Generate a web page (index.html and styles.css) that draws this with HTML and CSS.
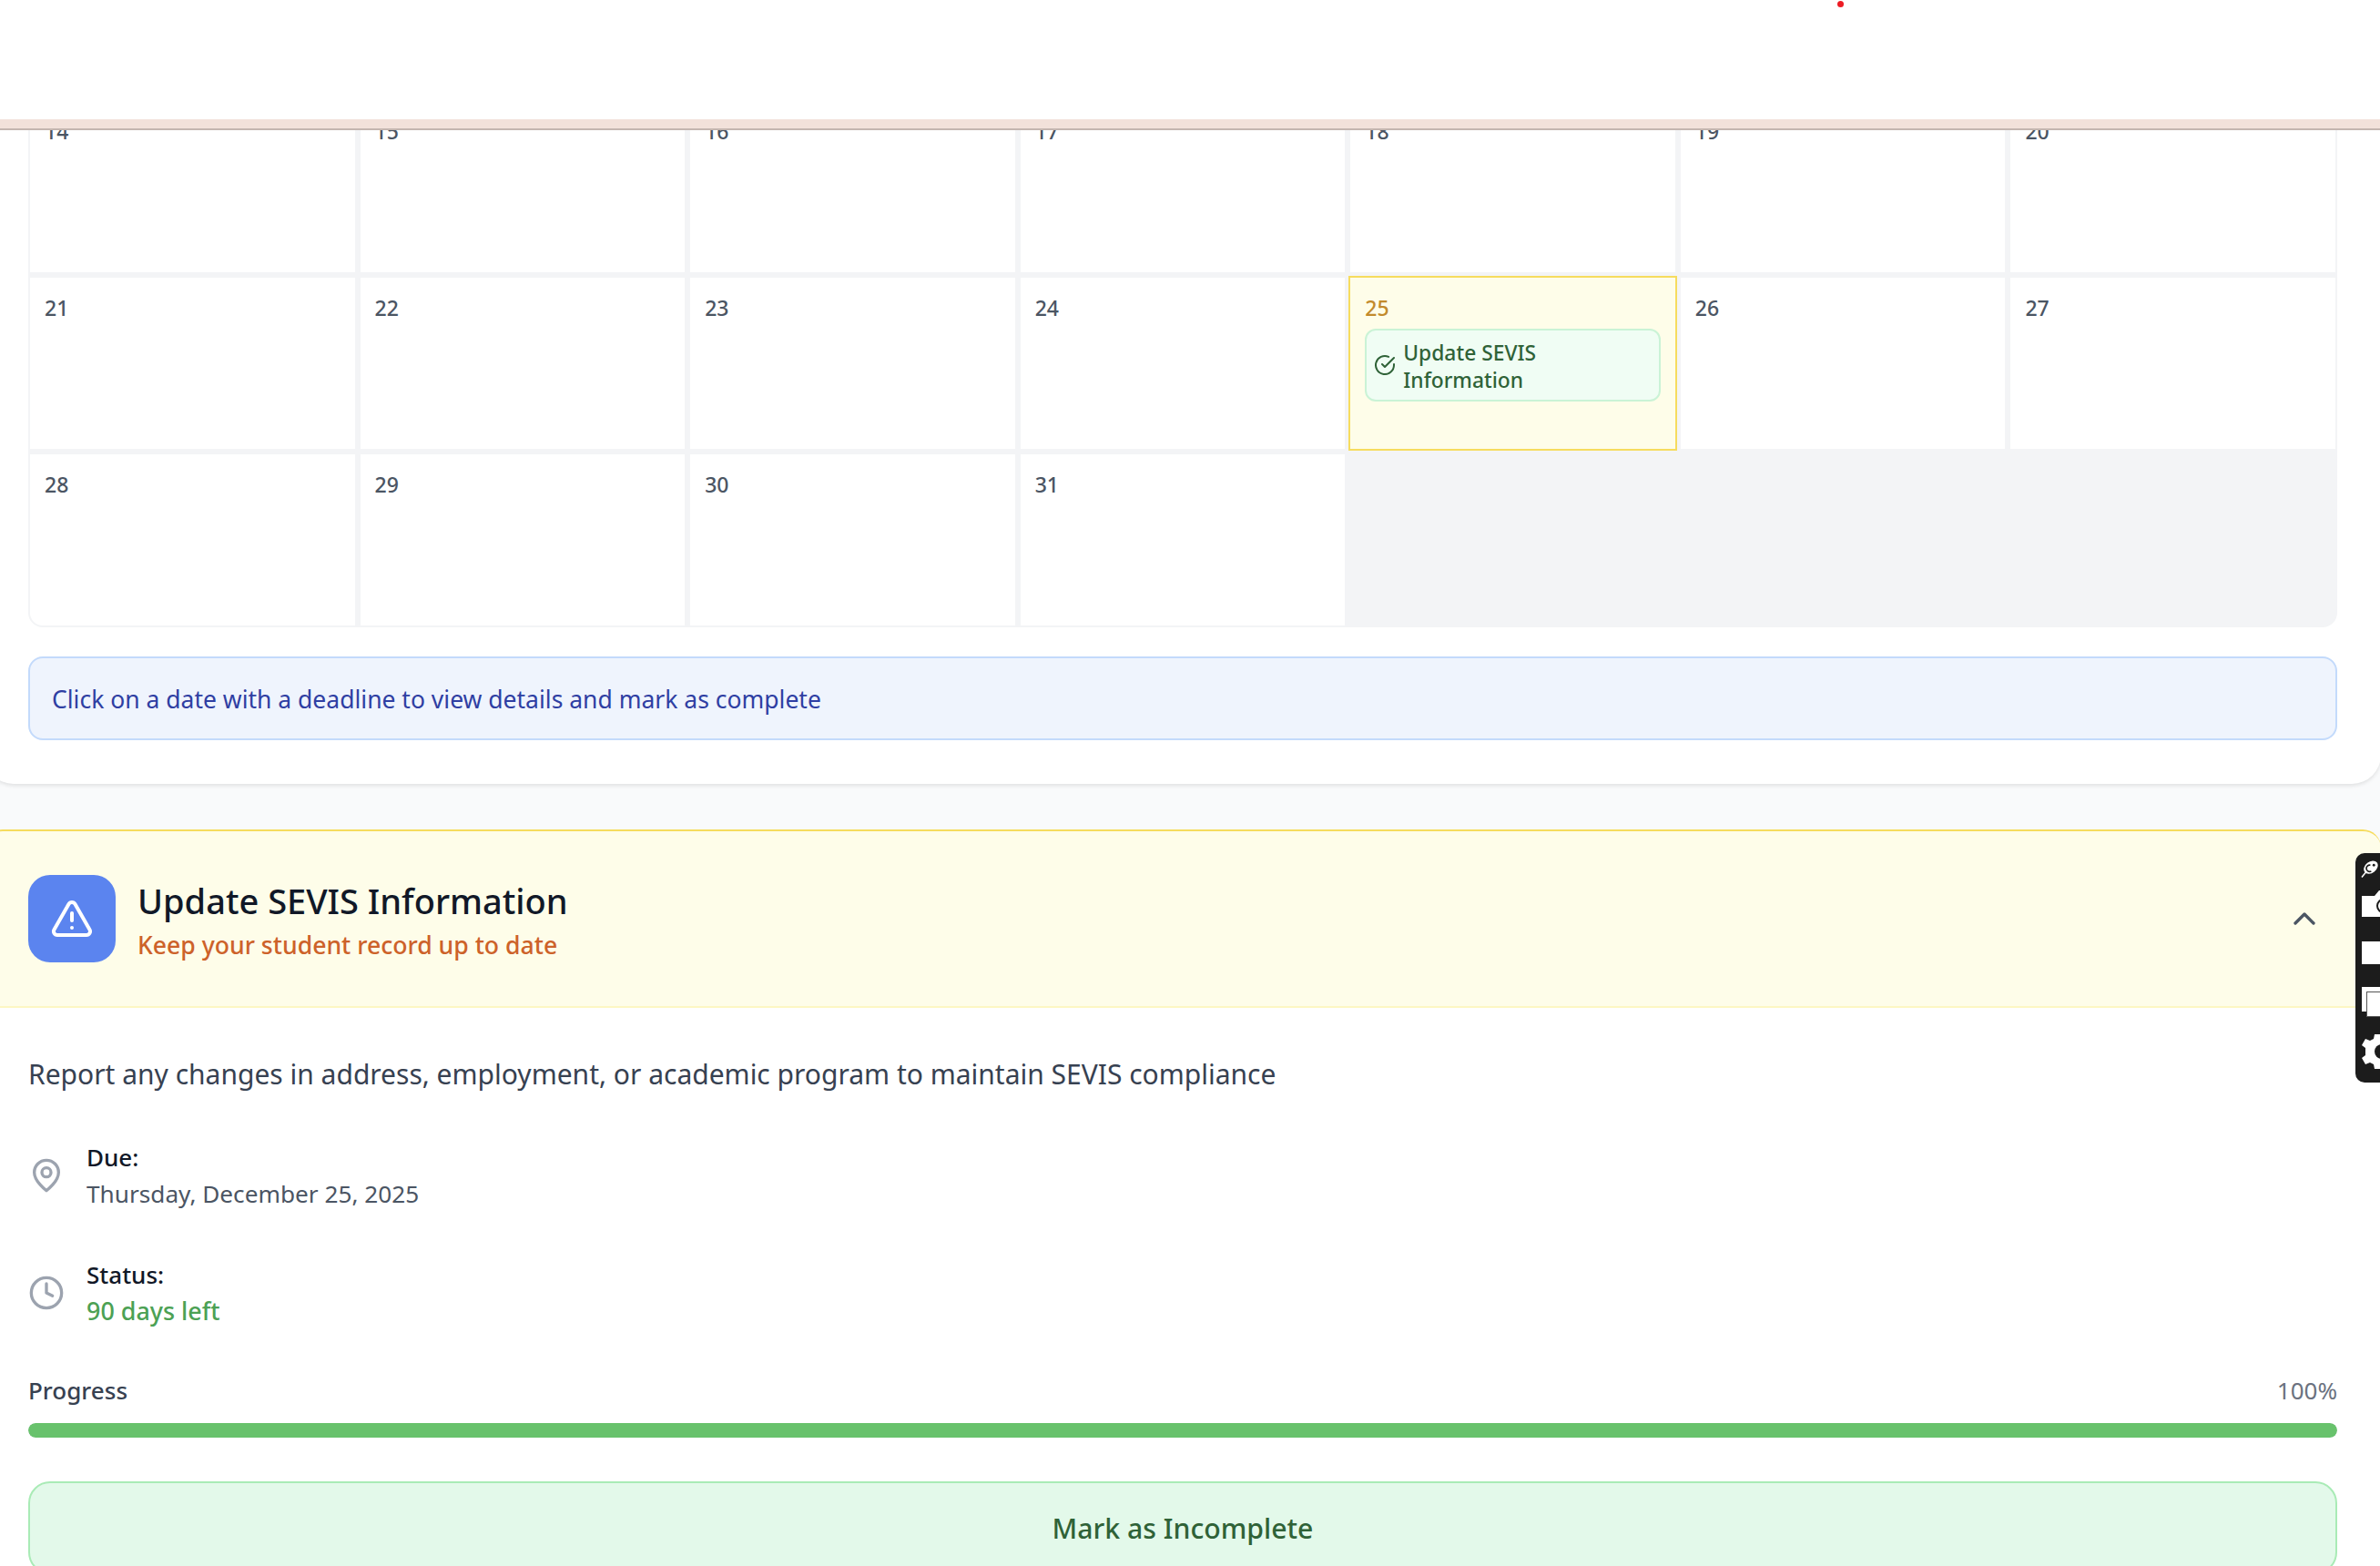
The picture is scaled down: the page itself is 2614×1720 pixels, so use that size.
FILE: index.html
```html
<!DOCTYPE html>
<html lang="en">
<head>
    <meta charset="UTF-8">
    <title>Update SEVIS Information</title>
    <link rel="stylesheet" href="styles.css">
</head>
<body>
    <div class="top-bar">
        <span class="red-dot"></span>
    </div>

    <section class="calendar-card">
        <div class="calendar-grid">
            <div class="day"><span class="day-num">14</span></div>
            <div class="day"><span class="day-num">15</span></div>
            <div class="day"><span class="day-num">16</span></div>
            <div class="day"><span class="day-num">17</span></div>
            <div class="day"><span class="day-num">18</span></div>
            <div class="day"><span class="day-num">19</span></div>
            <div class="day"><span class="day-num">20</span></div>
            <div class="day"><span class="day-num">21</span></div>
            <div class="day"><span class="day-num">22</span></div>
            <div class="day"><span class="day-num">23</span></div>
            <div class="day"><span class="day-num">24</span></div>
            <div class="day day-active">
                <span class="day-num">25</span>
                <div class="event-chip">
                    <svg class="chip-icon" viewBox="0 0 24 24"><path d="M22 11.08V12a10 10 0 1 1-5.93-9.14"/><path d="m9 11 3 3L22 4"/></svg>
                    <span class="chip-text">Update SEVIS Information</span>
                </div>
            </div>
            <div class="day"><span class="day-num">26</span></div>
            <div class="day"><span class="day-num">27</span></div>
            <div class="day"><span class="day-num">28</span></div>
            <div class="day"><span class="day-num">29</span></div>
            <div class="day"><span class="day-num">30</span></div>
            <div class="day"><span class="day-num">31</span></div>
        </div>
        <div class="notice">Click on a date with a deadline to view details and mark as complete</div>
    </section>

    <section class="detail-card">
        <header class="detail-head">
            <div class="head-icon">
                <svg viewBox="0 0 24 24"><path d="m21.73 18-8-14a2 2 0 0 0-3.48 0l-8 14A2 2 0 0 0 4 21h16a2 2 0 0 0 1.73-3"/><path d="M12 9v4"/><path d="M12 17h.01"/></svg>
            </div>
            <div class="head-text">
                <h2>Update SEVIS Information</h2>
                <p>Keep your student record up to date</p>
            </div>
            <svg class="chevron" viewBox="0 0 24 24"><path d="m18 15-6-6-6 6"/></svg>
        </header>
        <div class="detail-body">
            <p class="description">Report any changes in address, employment, or academic program to maintain SEVIS compliance</p>
            <div class="info-row">
                <svg class="info-icon" viewBox="0 0 24 24"><path d="M20 10c0 6-8 12-8 12s-8-6-8-12a8 8 0 0 1 16 0Z"/><circle cx="12" cy="10" r="3"/></svg>
                <div>
                    <div class="info-label">Due:</div>
                    <div class="info-value">Thursday, December 25, 2025</div>
                </div>
            </div>
            <div class="info-row">
                <svg class="info-icon" viewBox="0 0 24 24"><circle cx="12" cy="12" r="10"/><path d="M12 6v6l4 2"/></svg>
                <div>
                    <div class="info-label">Status:</div>
                    <div class="info-value days-left">90 days left</div>
                </div>
            </div>
            <div class="progress-head">
                <span class="progress-label">Progress</span>
                <span class="progress-pct">100%</span>
            </div>
            <div class="progress-track"><div class="progress-fill"></div></div>
            <button class="mark-btn">Mark as Incomplete</button>
        </div>
    </section>

    <!-- screenshot tool strip on the window edge -->
    <div class="tool-strip">
        <svg class="tool tool-bird" viewBox="0 0 20 20"><path d="M1 19.500l5-6" fill="none" stroke="#fff" stroke-width="1.600"/><ellipse cx="11.500" cy="8" rx="9" ry="6.500" transform="rotate(-38 11.500 8)" fill="#fff"/><path d="M11 5.500a3.800 3.800 0 1 0 1 7" fill="none" stroke="#1c1c1c" stroke-width="1.800"/><circle cx="15" cy="5.500" r="1.500" fill="#1c1c1c"/></svg>
        <svg class="tool tool-camera" viewBox="0 0 27 29"><path d="M0 6h14l5-6h8v29H0z" fill="#fff"/><circle cx="24" cy="17" r="7" fill="none" stroke="#1c1c1c" stroke-width="2"/></svg>
        <div class="tool tool-box"></div>
        <div class="tool tool-copy"><div></div></div>
        <svg class="tool tool-gear" viewBox="0 0 27 38"><path d="M14 0h8l2 5 3 1v26l-3 1-2 5h-8l-1-5-4-2-5 2-4-7 4-3v-8l-4-3 4-7 5 2 4-2z" fill="#fff"/><circle cx="22" cy="19" r="8" fill="#1c1c1c"/></svg>
    </div>
</body>
</html>
```

FILE: styles.css
```css
html, body {
    height: 100%;
}
body {
    margin: 0;
    overflow: hidden;
    background: #f9fafb;
    font-family: "Noto Sans", sans-serif;
    color: #374151;
}
svg {
    display: block;
}

.top-bar {
    position: absolute;
    top: 0;
    left: 0;
    right: 0;
    height: 131px;
    background: #fff;
    border-bottom: 10px solid #f2e1da;
    box-shadow: 0 2px 0 #c4b6b0;
    z-index: 5;
}
.red-dot {
    position: absolute;
    left: 2018px;
    top: 1px;
    width: 7px;
    height: 7px;
    border-radius: 50%;
    background: #ed1c24;
}

.calendar-card {
    width: 2632px;
    box-sizing: border-box;
    margin-left: -17px;
    padding: 109px 48px 48px;
    background: #fff;
    border-radius: 0 0 32px 32px;
    box-shadow: 0 2px 4px rgba(0, 0, 0, 0.1);
}
.calendar-grid {
    display: grid;
    grid-template-columns: repeat(7, 1fr);
    grid-auto-rows: 188px;
    gap: 6px;
    border: 2px solid #f3f4f6;
    border-radius: 16px;
    background: #f3f4f6;
    overflow: hidden;
}
.day {
    padding: 16px 16px;
    background: #fff;
    font-size: 23px;
    line-height: 34px;
}
.day-num {
    display: block;
    font-weight: 500;
    color: #4b5563;
}
.day-active {
    background: #fefde9;
    outline: 2px solid #f6dc5e;
}
.day-active .day-num {
    color: #c28a2c;
}
.event-chip {
    display: flex;
    align-items: center;
    gap: 8px;
    margin-top: 6px;
    padding: 6px 8px;
    border: 2px solid #caf3d6;
    border-radius: 12px;
    background: #f0fdf4;
    color: #2f6237;
    font-size: 22.8px;
    font-weight: 500;
    line-height: 30px;
}
.chip-text {
    padding-top: 4px;
}
.chip-icon {
    flex: none;
    width: 24px;
    height: 24px;
    fill: none;
    stroke: #2f6237;
    stroke-width: 2;
    stroke-linecap: round;
    stroke-linejoin: round;
}

.notice {
    margin-top: 32px;
    padding: 30px 24px 27px;
    border: 2px solid #c3dafb;
    border-radius: 16px;
    background: #eff4fd;
    color: #2f3fa3;
    font-size: 26.5px;
    line-height: 31px;
}

.detail-card {
    width: 2632px;
    box-sizing: border-box;
    margin: 50px 0 0 -17px;
    background: #fff;
    border-radius: 20px 20px 0 0;
}
.detail-head {
    display: flex;
    align-items: center;
    gap: 24px;
    padding: 48px 64px 48px 48px;
    border-top: 2px solid #f6dc5e;
    border-bottom: 2px solid #fdf7c3;
    border-radius: 20px 20px 0 0;
    background: #fefde9;
}
.head-icon {
    display: flex;
    flex: none;
    align-items: center;
    justify-content: center;
    width: 96px;
    height: 96px;
    border-radius: 24px;
    background: #5b84ef;
}
.head-icon svg {
    width: 48px;
    height: 48px;
    fill: none;
    stroke: #fff;
    stroke-width: 2;
    stroke-linecap: round;
    stroke-linejoin: round;
}
.head-text {
    flex: 1;
}
.head-text h2 {
    margin: 0;
    font-size: 38px;
    font-weight: 500;
    line-height: 54px;
    color: #111827;
}
.head-text p {
    margin: 2px 0 -2px;
    font-size: 26.6px;
    font-weight: 500;
    line-height: 40px;
    color: #cd6229;
}
.chevron {
    flex: none;
    width: 40px;
    height: 40px;
    fill: none;
    stroke: #4b5563;
    stroke-width: 2;
    stroke-linecap: round;
    stroke-linejoin: round;
}

.detail-body {
    padding: 49px 48px 48px;
}
.description {
    margin: 0 0 47px;
    font-size: 30px;
    line-height: 48px;
    color: #374151;
}
.info-row {
    display: flex;
    align-items: center;
    gap: 24px;
    margin-bottom: 49px;
}
.info-row + .progress-head {
    margin-top: -2px;
}
.info-icon {
    flex: none;
    width: 40px;
    height: 40px;
    fill: none;
    stroke: #9ca3af;
    stroke-width: 2;
    stroke-linecap: round;
    stroke-linejoin: round;
}
.info-label {
    font-size: 26px;
    font-weight: 500;
    line-height: 40px;
    color: #111827;
}
.info-value {
    font-size: 26.2px;
    line-height: 40px;
    color: #4b5563;
}
.days-left {
    font-size: 26.9px;
    font-weight: 500;
    color: #4ca154;
}
.progress-head {
    display: flex;
    justify-content: space-between;
    font-size: 26px;
    line-height: 40px;
}
.progress-label {
    font-weight: 500;
    color: #374151;
}
.progress-pct {
    color: #6b7280;
}
.progress-track {
    height: 16px;
    margin-top: 16px;
    border-radius: 8px;
    background: #e5e7eb;
    overflow: hidden;
}
.progress-fill {
    height: 100%;
    border-radius: 8px;
    background: #68c26c;
}
.mark-btn {
    display: block;
    width: 100%;
    height: 102px;
    margin-top: 48px;
    border: 2px solid #a9ebb6;
    border-radius: 24px;
    background: #e3f9ea;
    color: #2f6237;
    font-family: inherit;
    font-size: 30.2px;
    font-weight: 500;
}

.tool-strip {
    position: absolute;
    top: 937px;
    right: 0;
    width: 27px;
    height: 252px;
    border-radius: 10px 0 0 10px;
    background: #1c1c1c;
    overflow: hidden;
    z-index: 6;
}
.tool {
    position: absolute;
    left: 7px;
}
.tool-bird {
    top: 8px;
    left: 6px;
    width: 19px;
    height: 19px;
}
.tool-camera {
    top: 41px;
    width: 27px;
    height: 29px;
}
.tool-box {
    top: 97px;
    width: 27px;
    height: 25px;
    background: #fff;
}
.tool-copy {
    top: 147px;
    width: 27px;
    height: 27px;
    background: #fff;
}
.tool-copy div {
    box-sizing: border-box;
    width: 27px;
    height: 28px;
    margin: 5px 0 0 5px;
    border: 1px solid #555;
    background: #fff;
}
.tool-gear {
    top: 199px;
    width: 27px;
    height: 38px;
}
```
